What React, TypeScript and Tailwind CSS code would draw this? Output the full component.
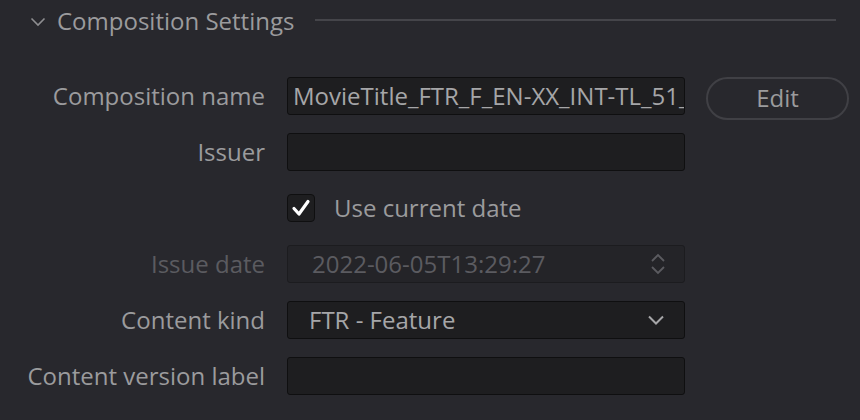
import React from "react";

const labelCls = "w-[265px] shrink-0 text-right text-[24px] leading-none";
const fieldCls =
  "ml-[22px] w-[398px] h-[38px] rounded-[3px] bg-[#1e1e20] border border-[#0f0f10] flex items-center overflow-hidden";

const Row: React.FC<{ label: string; dim?: boolean; children: React.ReactNode }> = ({
  label,
  dim,
  children,
}) => (
  <div className="flex items-center h-[38px]">
    <div className={`${labelCls} ${dim ? "text-[#5b5b60]" : "text-[#9b9b9d]"}`}>{label}</div>
    {children}
  </div>
);

export default function App() {
  return (
    <div
      className="w-[860px] h-[420px] bg-[#28282d] text-[#9b9b9d] overflow-hidden"
      style={{ fontFamily: "'Open Sans', sans-serif" }}
    >
      {/* Section header */}
      <div className="flex items-center h-[42px] pl-[30px] pr-[24px]">
        <svg width="16" height="10" viewBox="0 0 16 10" className="mt-[2px]">
          <path d="M1.5 1.5 L8 8 L14.5 1.5" fill="none" stroke="#8e8e91" strokeWidth="1.6" />
        </svg>
        <span className="ml-[11px] text-[24px] leading-none text-[#9b9b9d]">Composition Settings</span>
        <div className="flex-1 ml-[21px] h-[2px] bg-[#45454a] mt-[-2px]" />
      </div>

      <div className="flex flex-col gap-[18px] mt-[35px]">
        <Row label="Composition name">
          <div className={fieldCls}>
            <span className="pl-[5px] text-[24px] leading-none text-[#a6a6a8] whitespace-nowrap">
              MovieTitle_FTR_F_EN-XX_INT-TL_51_
            </span>
          </div>
          <button className="ml-[21px] w-[143px] h-[43px] rounded-full border-2 border-[#404045] text-[24px] leading-none text-[#9b9b9d] mt-[4px]">
            Edit
          </button>
        </Row>

        <Row label="Issuer">
          <div className={fieldCls} />
        </Row>

        <div className="flex items-center h-[38px]">
          <div className="w-[265px] shrink-0" />
          <div className="ml-[22px] w-[28px] h-[28px] rounded-[4px] bg-[#1e1e20] border border-[#0f0f10] flex items-center justify-center">
            <svg width="20" height="18" viewBox="0 0 20 18">
              <path d="M3 9.5 L8 15 L17 2.5" fill="none" stroke="#ffffff" strokeWidth="3.2" strokeLinecap="round" strokeLinejoin="round" />
            </svg>
          </div>
          <span className="ml-[19px] text-[24px] leading-none text-[#9b9b9d]">Use current date</span>
        </div>

        <Row label="Issue date" dim>
          <div className="ml-[22px] w-[398px] h-[38px] rounded-[3px] bg-[#242428] border border-[#1c1c1f] flex items-center justify-between pl-[24px] pr-[18px]">
            <span className="text-[24px] leading-none text-[#5b5b60]">2022-06-05T13:29:27</span>
            <svg width="16" height="24" viewBox="0 0 16 24">
              <path d="M2 9 L8 3 L14 9 M2 15 L8 21 L14 15" fill="none" stroke="#5b5b60" strokeWidth="1.8" />
            </svg>
          </div>
        </Row>

        <Row label="Content kind">
          <div className={`${fieldCls} justify-between pl-[21px] pr-[19px]`}>
            <span className="text-[24px] leading-none text-[#a6a6a8]">FTR - Feature</span>
            <svg width="18" height="12" viewBox="0 0 18 12">
              <path d="M2 2.5 L9 9.5 L16 2.5" fill="none" stroke="#a6a6a8" strokeWidth="2" />
            </svg>
          </div>
        </Row>

        <Row label="Content version label">
          <div className={fieldCls} />
        </Row>
      </div>
    </div>
  );
}
